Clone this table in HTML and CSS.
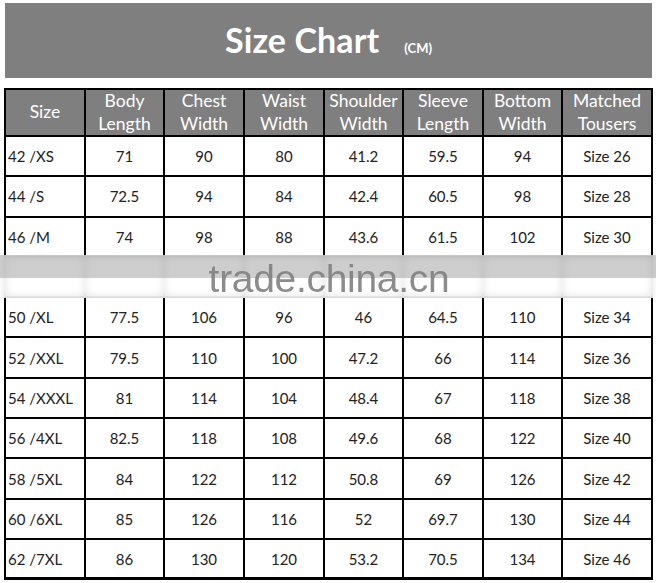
FILE: index.html
```html
<!DOCTYPE html>
<html lang="en">
<head>
<meta charset="utf-8">
<title>Size Chart</title>
<link rel="stylesheet" href="styles.css">
</head>
<body>
<div class="page">
  <header class="title">
    <h1 class="title-main">Size Chart</h1>
    <span class="title-unit">(CM)</span>
  </header>
  <div class="chart">
    <table class="sizes">
      <colgroup>
        <col class="c-size"><col class="c79"><col class="c80"><col class="c80"><col class="c79"><col class="c80"><col class="c79"><col class="c-last">
      </colgroup>
      <thead>
        <tr>
          <th>Size</th>
          <th>Body<br>Length</th>
          <th>Chest<br>Width</th>
          <th>Waist<br>Width</th>
          <th>Shoulder<br>Width</th>
          <th>Sleeve<br>Length</th>
          <th>Bottom<br>Width</th>
          <th>Matched<br>Tousers</th>
        </tr>
      </thead>
      <tbody>
        <tr><td class="size">42 /XS</td><td>71</td><td>90</td><td>80</td><td>41.2</td><td>59.5</td><td>94</td><td>Size 26</td></tr>
        <tr><td class="size">44 /S</td><td>72.5</td><td>94</td><td>84</td><td>42.4</td><td>60.5</td><td>98</td><td>Size 28</td></tr>
        <tr><td class="size">46 /M</td><td>74</td><td>98</td><td>88</td><td>43.6</td><td>61.5</td><td>102</td><td>Size 30</td></tr>
        <tr><td class="size"></td><td></td><td></td><td></td><td></td><td></td><td></td><td></td></tr>
        <tr><td class="size">50 /XL</td><td>77.5</td><td>106</td><td>96</td><td>46</td><td>64.5</td><td>110</td><td>Size 34</td></tr>
        <tr><td class="size">52 /XXL</td><td>79.5</td><td>110</td><td>100</td><td>47.2</td><td>66</td><td>114</td><td>Size 36</td></tr>
        <tr><td class="size">54 /XXXL</td><td>81</td><td>114</td><td>104</td><td>48.4</td><td>67</td><td>118</td><td>Size 38</td></tr>
        <tr><td class="size">56 /4XL</td><td>82.5</td><td>118</td><td>108</td><td>49.6</td><td>68</td><td>122</td><td>Size 40</td></tr>
        <tr><td class="size">58 /5XL</td><td>84</td><td>122</td><td>112</td><td>50.8</td><td>69</td><td>126</td><td>Size 42</td></tr>
        <tr><td class="size">60 /6XL</td><td>85</td><td>126</td><td>116</td><td>52</td><td>69.7</td><td>130</td><td>Size 44</td></tr>
        <tr class="last"><td class="size">62 /7XL</td><td>86</td><td>130</td><td>120</td><td>53.2</td><td>70.5</td><td>134</td><td>Size 46</td></tr>
      </tbody>
    </table>
    <div class="watermark"><span class="watermark-text">trade.china.cn</span></div>
  </div>
</div>
</body>
</html>
```

FILE: styles.css
```css
html, body {
  margin: 0;
  padding: 0;
  background: #ffffff;
}

body {
  font-family: Lato, "Liberation Sans", sans-serif;
  color: #222222;
}

.page {
  width: 656px;
  padding-top: 3px;
}

.title {
  margin: 0 4px 0 5px;
  height: 75px;
  background: #7f7f7f;
  display: flex;
  align-items: baseline;
  justify-content: center;
  gap: 25px;
  line-height: 73px;
}

.title-main {
  margin: 0;
  font-family: Lato, "Liberation Sans", sans-serif;
  font-weight: 700;
  font-size: 34px;
  color: #ffffff;
  letter-spacing: 0.1px;
}

.title-unit {
  font-weight: 700;
  font-size: 13px;
  color: #ffffff;
}

.chart {
  position: relative;
  margin: 10px 0 0 4px;
  width: 649px;
}

.sizes {
  border-collapse: separate;
  border-spacing: 0;
  table-layout: fixed;
  width: 649px;
  border-left: 2px solid #000;
  border-top: 2px solid #000;
}

.c-size { width: 80px; }
.c79 { width: 79px; }
.c80 { width: 80px; }
.c-last { width: 90px; }

.sizes th,
.sizes td {
  border-right: 2px solid #000;
  border-bottom: 2px solid #000;
  padding: 0;
  text-align: center;
  vertical-align: middle;
  box-sizing: border-box;
}

.sizes th {
  background: #7f7f7f;
  color: #ffffff;
  font-weight: 400;
  font-size: 17.5px;
  line-height: 22.5px;
}

.sizes thead tr {
  height: 47px;
}

.sizes tbody tr {
  height: 40.3px;
}

.sizes td {
  font-size: 15px;
  line-height: 18px;
}

.sizes td.size {
  text-align: left;
  padding-left: 2px;
}

.sizes tr.last td {
  border-bottom-width: 3px;
}

.watermark {
  position: absolute;
  left: -4px;
  top: 167px;
  width: 656px;
  height: 43px;
  background: linear-gradient(to bottom, rgba(200, 200, 200, 0.9) 0, rgba(200, 200, 200, 0.9) 23px, rgba(255, 255, 255, 0.8) 23px, rgba(255, 255, 255, 0.8) 100%);
  backdrop-filter: blur(3px);
  display: flex;
  justify-content: center;
  align-items: flex-start;
}

.watermark-text {
  font-family: "Liberation Sans", Arial, sans-serif;
  font-size: 39px;
  line-height: 43px;
  padding-top: 2px;
  padding-left: 2px;
  color: rgba(128, 128, 128, 0.9);
  letter-spacing: -0.3px;
}
```
